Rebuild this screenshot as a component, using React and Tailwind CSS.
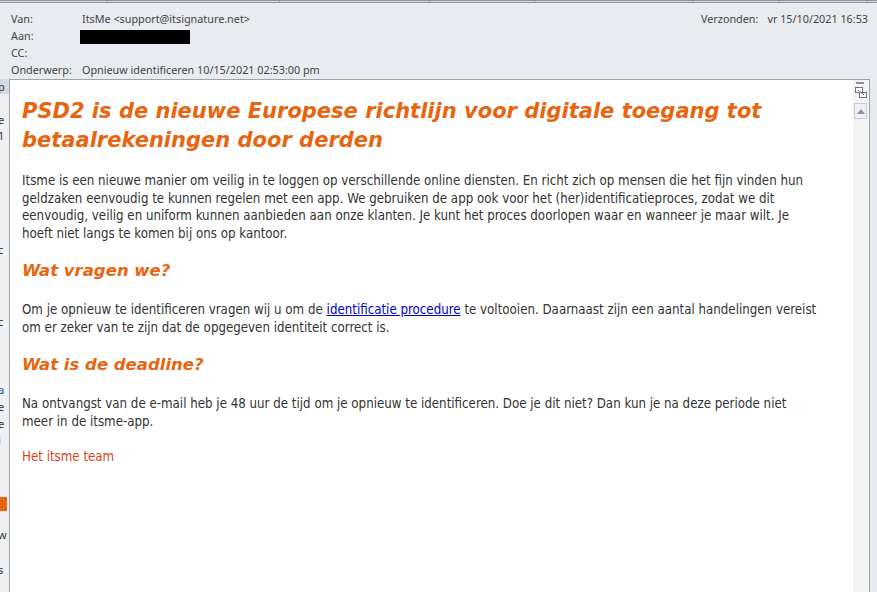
import React from "react";

/* =======================
   Outlook-style reading pane
======================= */

const headerFont = { fontFamily: "'Noto Sans', 'Open Sans', sans-serif" };

const HeaderRow = ({ label, children }) => (
  <div className="flex h-[17px] items-center">
    <span className="w-[71px] shrink-0">{label}</span>
    <span>{children}</span>
  </div>
);

// clipped fragments of the message list behind the reading pane
const listBits = [
  { top: 2, ch: "p", cls: "text-[#333]" },
  { top: 35, ch: "e", cls: "text-[#333]" },
  { top: 51, ch: "1", cls: "text-[#333]" },
  { top: 165, ch: "c", cls: "text-[#333]" },
  { top: 237, ch: "c", cls: "text-[#333]" },
  { top: 305, ch: "a", cls: "text-[#1f4e8c]" },
  { top: 322, ch: "e", cls: "text-[#333]" },
  { top: 339, ch: "e", cls: "text-[#333]" },
  { top: 355, ch: "i", cls: "text-[#333]" },
  { top: 450, ch: "w", cls: "text-[#333]" },
  { top: 485, ch: "s", cls: "text-[#333]" },
];

const ListFragment = () => (
  <div className="relative w-[10px] shrink-0 overflow-hidden border-r border-[#9aa2ad] bg-[#eef0f3] text-[11px]">
    <div className="h-[15px] bg-[#d5d9df]" />
    {listBits.map((b, i) => (
      <span key={i} className={`absolute -left-[2px] leading-none ${b.cls}`} style={{ top: b.top }}>
        {b.ch}
      </span>
    ))}
    <div className="absolute -left-[4px] top-[418px] h-[14px] w-[11px] bg-[#e8650f]" />
  </div>
);

const ScrollBar = () => (
  <div className="relative w-[17px] shrink-0 border-r border-[#9aa2ad] bg-[#f4f4f4]">
    {/* split icon */}
    <div className="absolute left-[3px] top-[2px] h-[2px] w-[8px] bg-[#8c9199]" />
    <svg className="absolute left-[2px] top-[7px]" width="12" height="12" viewBox="0 0 12 12">
      <rect x="0.5" y="0.5" width="7" height="5" fill="#fff" stroke="#6b7280" />
      <rect x="4.5" y="5.5" width="7" height="5" fill="#fff" stroke="#6b7280" />
      <path d="M3 3 L9 8" stroke="#6b7280" />
    </svg>
    {/* up arrow */}
    <div className="absolute left-[1px] top-[23px] flex h-[16px] w-[13px] items-center justify-center border border-[#c8ccd2] bg-[#eef0f3]">
      <svg width="8" height="5" viewBox="0 0 8 5">
        <path d="M0 5 L4 0 L8 5 Z" fill="#8a95a5" />
      </svg>
    </div>
  </div>
);

export default function App() {
  return (
    <div className="flex h-[592px] w-[877px] flex-col overflow-hidden bg-[#e8ebf0] text-[#444]" style={headerFont}>
      {/* top column strip */}
      <div className="flex h-[3px] border-t border-b border-[#8f949b] bg-[#d9dde3]">
        {[108, 172, 150, 105, 158, 87, 88].map((w, i) => (
          <div key={i} className="h-full border-r border-[#8f949b]" style={{ width: w }} />
        ))}
      </div>

      {/* header */}
      <div className="flex pl-[11px] pr-[9px] pt-[8px] text-[10.8px]">
        <div className="flex-1">
          <HeaderRow label="Van:">ItsMe &lt;support@itsignature.net&gt;</HeaderRow>
          <HeaderRow label="Aan:">
            <span className="-ml-[2px] block h-[14px] w-[110px] bg-black" />
          </HeaderRow>
          <HeaderRow label="CC:" />
          <HeaderRow label="Onderwerp:">Opnieuw identificeren 10/15/2021 02:53:00 pm</HeaderRow>
        </div>
        <div className="flex h-[17px] items-center">
          <span className="mr-[9px]">Verzonden:</span>
          <span>vr 15/10/2021 16:53</span>
        </div>
      </div>

      {/* body */}
      <div className="flex min-h-0 flex-1">
        <ListFragment />
        <div className="flex min-w-0 flex-1 border-t border-[#9aa2ad] bg-white">
          <div
            className="min-w-0 flex-1 overflow-hidden pl-[12px] pt-[17px] text-[13.2px] leading-[17.5px] text-[#333] font-stretch-semi-condensed"
            style={{ fontFamily: "Tahoma, 'DejaVu Sans', sans-serif" }}
          >
            <h1 className="text-[21px] font-bold italic leading-[29px] text-[#e8650f] font-stretch-normal">
              PSD2 is de nieuwe Europese richtlijn voor digitale toegang tot
              <br />
              betaalrekeningen door derden
            </h1>

            <p className="mt-[17px] whitespace-nowrap">
              Itsme is een nieuwe manier om veilig in te loggen op verschillende online diensten. En richt zich op mensen die het fijn vinden hun
              <br />
              geldzaken eenvoudig te kunnen regelen met een app. We gebruiken de app ook voor het (her)identificatieproces, zodat we dit
              <br />
              eenvoudig, veilig en uniform kunnen aanbieden aan onze klanten. Je kunt het proces doorlopen waar en wanneer je maar wilt. Je
              <br />
              hoeft niet langs te komen bij ons op kantoor.
            </p>

            <h2 className="mt-[17px] text-[16.5px] font-bold italic leading-[24px] text-[#e8650f] font-stretch-normal">Wat vragen we?</h2>

            <p className="mt-[18px] whitespace-nowrap">
              Om je opnieuw te identificeren vragen wij u om de{" "}
              <a className="text-[#0000cc] underline">identificatie procedure</a> te voltooien. Daarnaast zijn een aantal handelingen vereist
              <br />
              om er zeker van te zijn dat de opgegeven identiteit correct is.
            </p>

            <h2 className="mt-[17px] text-[16.5px] font-bold italic leading-[24px] text-[#e8650f] font-stretch-normal">Wat is de deadline?</h2>

            <p className="mt-[18px] whitespace-nowrap">
              Na ontvangst van de e-mail heb je 48 uur de tijd om je opnieuw te identificeren. Doe je dit niet? Dan kun je na deze periode niet
              <br />
              meer in de itsme-app.
            </p>

            <p className="mt-[18px] text-[#e0401a]">Het itsme team</p>
          </div>
          <ScrollBar />
        </div>
        <div className="w-[7px] shrink-0 bg-[#e6e9ee]" />
      </div>
    </div>
  );
}
